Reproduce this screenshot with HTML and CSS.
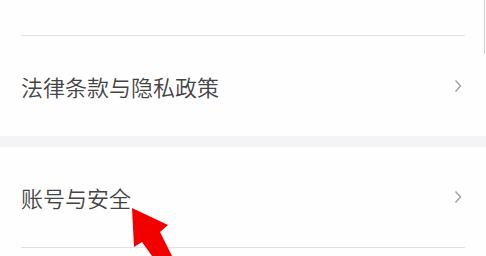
FILE: index.html
```
<!DOCTYPE html>
<html lang="zh-CN">
<head>
<meta charset="utf-8">
<link rel="stylesheet" href="styles.css">
</head>
<body>
<div class="page">
  <div class="top"><div class="divider"></div></div>
  <div class="row">
    <span class="label">法律条款与隐私政策</span>
    <svg class="chev" width="8" height="14" viewBox="0 0 8 14"><path d="M1.5 1.5 L6.5 7 L1.5 12.5" fill="none" stroke="#a0a0a0" stroke-width="1.4"/></svg>
  </div>
  <div class="band"></div>
  <div class="row">
    <span class="label">账号与安全</span>
    <svg class="chev" width="8" height="14" viewBox="0 0 8 14"><path d="M1.5 1.5 L6.5 7 L1.5 12.5" fill="none" stroke="#a0a0a0" stroke-width="1.4"/></svg>
  </div>
  <div class="divider"></div>
  <div class="scrollbar"></div>
  <svg class="arrow" width="486" height="256" viewBox="0 0 486 256">
    <polygon points="132,208 168,225 160,232 172,256 152,256 142,242 134,247" fill="#f20000"/>
  </svg>
</div>
</body>
</html>
```
FILE: styles.css
```
html, body {
  margin: 0;
  padding: 0;
  background: #fefefe;
}
.page {
  position: relative;
  width: 486px;
  height: 256px;
  overflow: hidden;
  font-family: "Noto Sans CJK SC", "Noto Sans", sans-serif;
}
.top {
  height: 36px;
  display: flex;
  flex-direction: column;
  justify-content: flex-end;
}
.divider {
  height: 1px;
  background: #e2e2e2;
  margin: 0 21px;
}
.row {
  height: 100px;
  display: flex;
  align-items: center;
  justify-content: space-between;
  padding: 0 24px 0 21px;
}
.label {
  font-size: 22px;
  font-weight: 350;
  color: #444444;
  letter-spacing: 0;
}
.band {
  height: 11px;
  background: #f4f4f6;
}
.scrollbar {
  position: absolute;
  right: 1px;
  top: 0;
  width: 1px;
  height: 54px;
  background: #d0d0d0;
}
.arrow {
  position: absolute;
  left: 0;
  top: 0;
}
```
